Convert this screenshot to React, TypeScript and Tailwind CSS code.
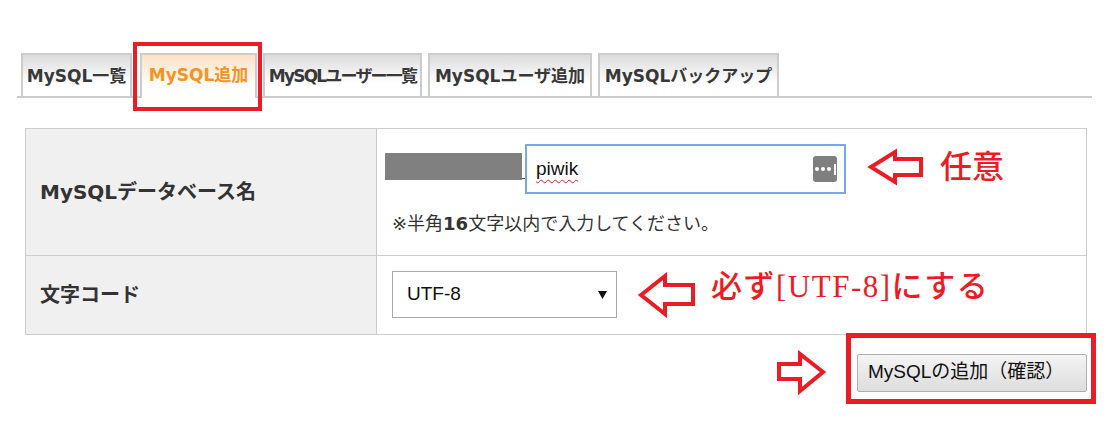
import React from "react";

const RED = "#ed1c24";

function Tab({ label, w, active, tight }: { label: string; w: number; active?: boolean; tight?: boolean }) {
  return (
    <div
      style={{ width: w }}
      className={
        active
          ? "h-[45px] -mb-[2px] ml-[8px] mr-[6px] border-t-2 border-x-2 border-[#cccccc] bg-[linear-gradient(to_bottom,#fde0c4,#ffffff_75%)] flex items-center justify-center pb-[2px] text-[17px] font-bold text-[#f7931e] whitespace-nowrap"
        : "h-[43px] border-t-2 border-x-2 border-[#cccccc] bg-[linear-gradient(to_bottom,#dcdcdc,#ffffff_70%)] flex items-center justify-center pt-[3px] text-[17px] font-bold text-[#383838] whitespace-nowrap"
      }
    >
      <span className={tight ? "tracking-[-1.8px]" : ""}>{label}</span>
    </div>
  );
}

export default function App() {
  return (
    <div
      className="relative w-[1117px] h-[436px] overflow-hidden bg-white"
      style={{ fontFamily: '"DejaVu Sans", "Noto Sans CJK JP", sans-serif' }}
    >
      {/* Tabs */}
      <div className="mt-[53px] ml-[17px] w-[1075px] flex items-end border-b-2 border-[#cccccc] pl-[4px]">
        <Tab label="MySQL一覧" w={111} />
        <Tab label="MySQL追加" w={117} active />
        <Tab label="MySQLユーザー一覧" w={159} tight />
        <div className="w-[6px]" />
        <Tab label="MySQLユーザ追加" w={164} />
        <div className="w-[6px]" />
        <Tab label="MySQLバックアップ" w={181} />
      </div>

      {/* Table */}
      <div className="mt-[30px] ml-[25px] w-[1062px] border-t border-l border-[#cccccc]">
        <div className="flex h-[127px]">
          <div className="w-[351px] bg-[#f0f0f0] border-r border-b border-[#cccccc] flex items-center pl-[14px] text-[20px] font-bold text-[#333333]">
            MySQLデータベース名
          </div>
          <div className="w-[710px] border-r border-b border-[#cccccc] pl-[8px] pt-[15px] flex flex-col">
            <div className="flex items-start">
              <div className="w-[137px] h-[27px] mt-[9px] bg-[#808080]" />
              <div className="w-[3px] h-px mt-[34px] bg-[#444444]" />
              <div className="w-[321px] h-[50px] border-2 border-[#7ba6e6] bg-white flex items-center justify-between pl-[9px] pr-[7px]">
                <span
                  className="text-[19px] text-[#111111] underline decoration-wavy decoration-[#e02020] decoration-1 underline-offset-[4px]"
                  style={{ fontFamily: '"Liberation Sans", Arial, sans-serif' }}
                >
                  piwik
                </span>
                <div className="w-[24px] h-[26px] rounded-[3px] bg-[#7f7f7f] flex items-center justify-center gap-[2px] pl-[1px]">
                  <span className="w-[4px] h-[4px] rounded-full bg-white" />
                  <span className="w-[4px] h-[4px] rounded-full bg-white" />
                  <span className="w-[4px] h-[4px] rounded-full bg-white" />
                  <span className="w-[2px] h-[11px] bg-white ml-[1px]" />
                </div>
              </div>
              <svg width="60" height="38" className="ml-[19px] mt-[4px]" viewBox="0 0 60 38">
                <polygon
                  points="6,19 30,4 30,11 56,11 56,27 30,27 30,34"
                  fill="white"
                  stroke={RED}
                  strokeWidth="4"
                  strokeLinejoin="miter"
                />
              </svg>
              <span
                className="ml-[15px] mt-[5px] text-[32px] leading-[36px] font-medium"
                style={{ color: RED, fontFamily: '"Liberation Serif", "Noto Sans CJK JP", serif' }}
              >
                任意
              </span>
            </div>
            <div className="mt-[18px] ml-[7px] text-[18px] leading-[24px] text-[#333333]">
              ※半角<span className="font-bold">16</span>文字以内で入力してください。
            </div>
          </div>
        </div>
        <div className="flex h-[79px]">
          <div className="w-[351px] bg-[#f0f0f0] border-r border-b border-[#cccccc] flex items-center pl-[14px] text-[20px] font-bold text-[#333333]">
            文字コード
          </div>
          <div className="w-[710px] border-r border-b border-[#cccccc] pl-[15px] pt-[15px] flex items-start">
            <div className="w-[225px] h-[47px] border border-[#a9a9a9] bg-white flex items-center justify-between pl-[14px] pr-[9px]">
              <span
                className="text-[19px] text-[#111111]"
                style={{ fontFamily: '"Liberation Sans", Arial, sans-serif' }}
              >
                UTF-8
              </span>
              <svg width="9" height="8" viewBox="0 0 9 8">
                <polygon points="0,0 9,0 4.5,8" fill="#111111" />
              </svg>
            </div>
            <svg width="62" height="46" className="ml-[18px] mt-[1px]" viewBox="0 0 62 46">
              <polygon
                points="6,23 30,4 30,13 58,13 58,32 30,32 30,42"
                fill="white"
                stroke={RED}
                strokeWidth="4"
                strokeLinejoin="miter"
              />
            </svg>
            <span
              className="ml-[14px] -mt-[2px] text-[31px] leading-[36px] font-medium tracking-[1.5px] whitespace-nowrap"
              style={{ color: RED, fontFamily: '"Liberation Serif", "Noto Sans CJK JP", serif' }}
            >
              必ず[UTF-8]にする
            </span>
          </div>
        </div>
      </div>

      {/* Button row */}
      <div className="mt-[15px] flex items-center justify-end pr-[30px]">
        <svg width="54" height="45" viewBox="0 0 54 45">
          <polygon
            points="4,14 25,14 25,4 48,22 25,41 25,29 4,29"
            fill="white"
            stroke={RED}
            strokeWidth="4"
            strokeLinejoin="miter"
          />
        </svg>
        <button
          className="ml-[28px] w-[230px] h-[38px] border border-[#adadad] rounded-[2px] bg-[linear-gradient(to_bottom,#f4f4f4,#dddddd)] flex items-center pl-[10px] text-[19px] text-[#111111]"
          style={{ fontFamily: '"Liberation Sans", "Noto Sans CJK JP", sans-serif' }}
        >
          MySQLの追加（確認）
        </button>
      </div>

      {/* Red annotation boxes */}
      <div className="absolute left-[133px] top-[42px] w-[129px] h-[69px] border-4 border-[#ed1c24]" />
      <div className="absolute left-[846px] top-[333px] w-[250px] h-[71px] border-[5px] border-[#ed1c24]" />
    </div>
  );
}
